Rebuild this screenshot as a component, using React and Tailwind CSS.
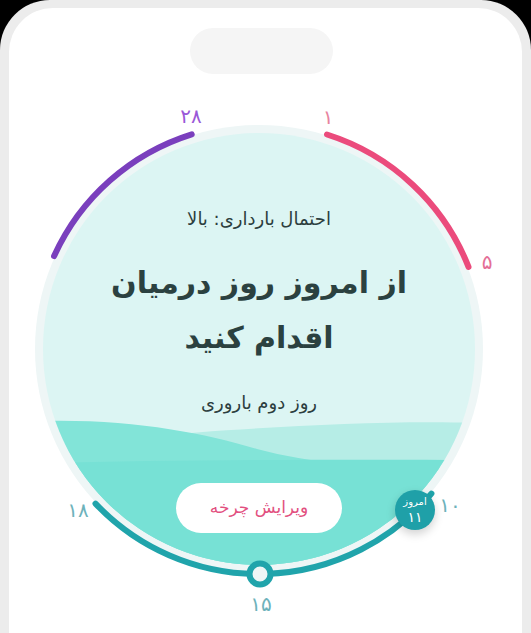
import React from 'react'

const FONT = { fontFamily: '"DejaVu Sans", "Noto Sans", sans-serif' }

function Label({ x, y, color, children }) {
    return (
        <span
            className={`absolute -translate-x-1/2 -translate-y-1/2 text-[20px] leading-none ${color}`}
            style={{ left: x, top: y }}
        >
            {children}
        </span>
    )
}

function Waves() {
    return (
        <svg className="absolute inset-0" width="432" height="432" viewBox="0 0 432 432">
            <path d="M0,312 C110,302 300,286 432,290 L432,432 L0,432 Z" fill="#b6ede6" />
            <path d="M0,288 C90,286 160,300 214,316 C280,334 360,336 432,334 L432,432 L0,432 Z" fill="#82e4d8" />
            <path d="M0,330 C140,327 300,326 432,327 L432,432 L0,432 Z" fill="#77e1d5" />
        </svg>
    )
}

function Dial() {
    return (
        <div className="relative mt-[35px] ml-[10px] w-[480px] h-[480px] flex items-center justify-center">
            {/* ring + inner disc */}
            <div className="w-[448px] h-[448px] rounded-full bg-[#eef6f6] p-[8px]">
                <div className="relative w-[432px] h-[432px] rounded-full overflow-hidden bg-[#dcf5f3]">
                    <Waves />
                    <div dir="rtl" className="relative z-10 flex flex-col items-center text-[#2c3e3e]">
                        <p className="pt-[74px] text-[18px] leading-[24px]">احتمال بارداری: بالا</p>
                        <h1 className="mt-[24px] text-[30px] font-bold leading-[55px] text-center text-[#2b4140]">
                            از امروز روز درمیان
                            <br />
                            اقدام کنید
                        </h1>
                        <p className="mt-[26px] text-[18px] leading-[24px]">روز دوم باروری</p>
                        <button className="mt-[68px] w-[166px] h-[50px] rounded-full bg-white text-[#e2507f] text-[17px]">
                            ویرایش چرخه
                        </button>
                    </div>
                </div>
            </div>

            {/* arcs */}
            <svg className="absolute inset-0 overflow-visible" width="480" height="480" viewBox="0 0 480 480">
                <path d="M308,25.5 A225,225 0 0 1 449.5,157.9" fill="none" stroke="#eb4b7c" strokeWidth="6" strokeLinecap="round" />
                <path d="M35.1,147.1 A225,225 0 0 1 172.7,25.3" fill="none" stroke="#7a3fbd" strokeWidth="6" strokeLinecap="round" />
                <path d="M412.4,384.6 A225,225 0 0 1 76.5,394.6" fill="none" stroke="#20a4ab" strokeWidth="6" strokeLinecap="round" />
                <circle cx="241" cy="465" r="10.5" fill="#eef6f6" stroke="#20a4ab" strokeWidth="6" />
            </svg>

            {/* today badge */}
            <div
                dir="rtl"
                className="absolute -translate-x-1/2 -translate-y-1/2 w-[40px] h-[40px] rounded-full bg-[#1fa0a8] shadow-[0_4px_10px_rgba(0,0,0,0.18)] flex flex-col items-center justify-center gap-[3px] text-white"
                style={{ left: 396, top: 401 }}
            >
                <span className="text-[10px] leading-none">امروز</span>
                <span className="text-[14px] leading-none">۱۱</span>
            </div>

            <Label x={309} y={8} color="text-[#e8849f]">۱</Label>
            <Label x={172} y={7} color="text-[#9a58d8]">۲۸</Label>
            <Label x={468} y={153} color="text-[#e46f97]">۵</Label>
            <Label x={431} y={396} color="text-[#6db2bb]">۱۰</Label>
            <Label x={59} y={401} color="text-[#6db2bb]">۱۸</Label>
            <Label x={242} y={495} color="text-[#6db2bb]">۱۵</Label>
        </div>
    )
}

export default function App() {
    return (
        <div className="w-[531px] h-[633px] bg-black overflow-hidden" style={FONT}>
            <div className="h-full bg-[#ececec] rounded-t-[50px] px-[9px] pt-[8px]">
                <div className="h-full bg-white rounded-t-[44px] flex flex-col items-start">
                    <div className="mt-[20px] ml-[181px] w-[143px] h-[46px] rounded-full bg-[#f5f5f5]" />
                    <Dial />
                </div>
            </div>
        </div>
    )
}
